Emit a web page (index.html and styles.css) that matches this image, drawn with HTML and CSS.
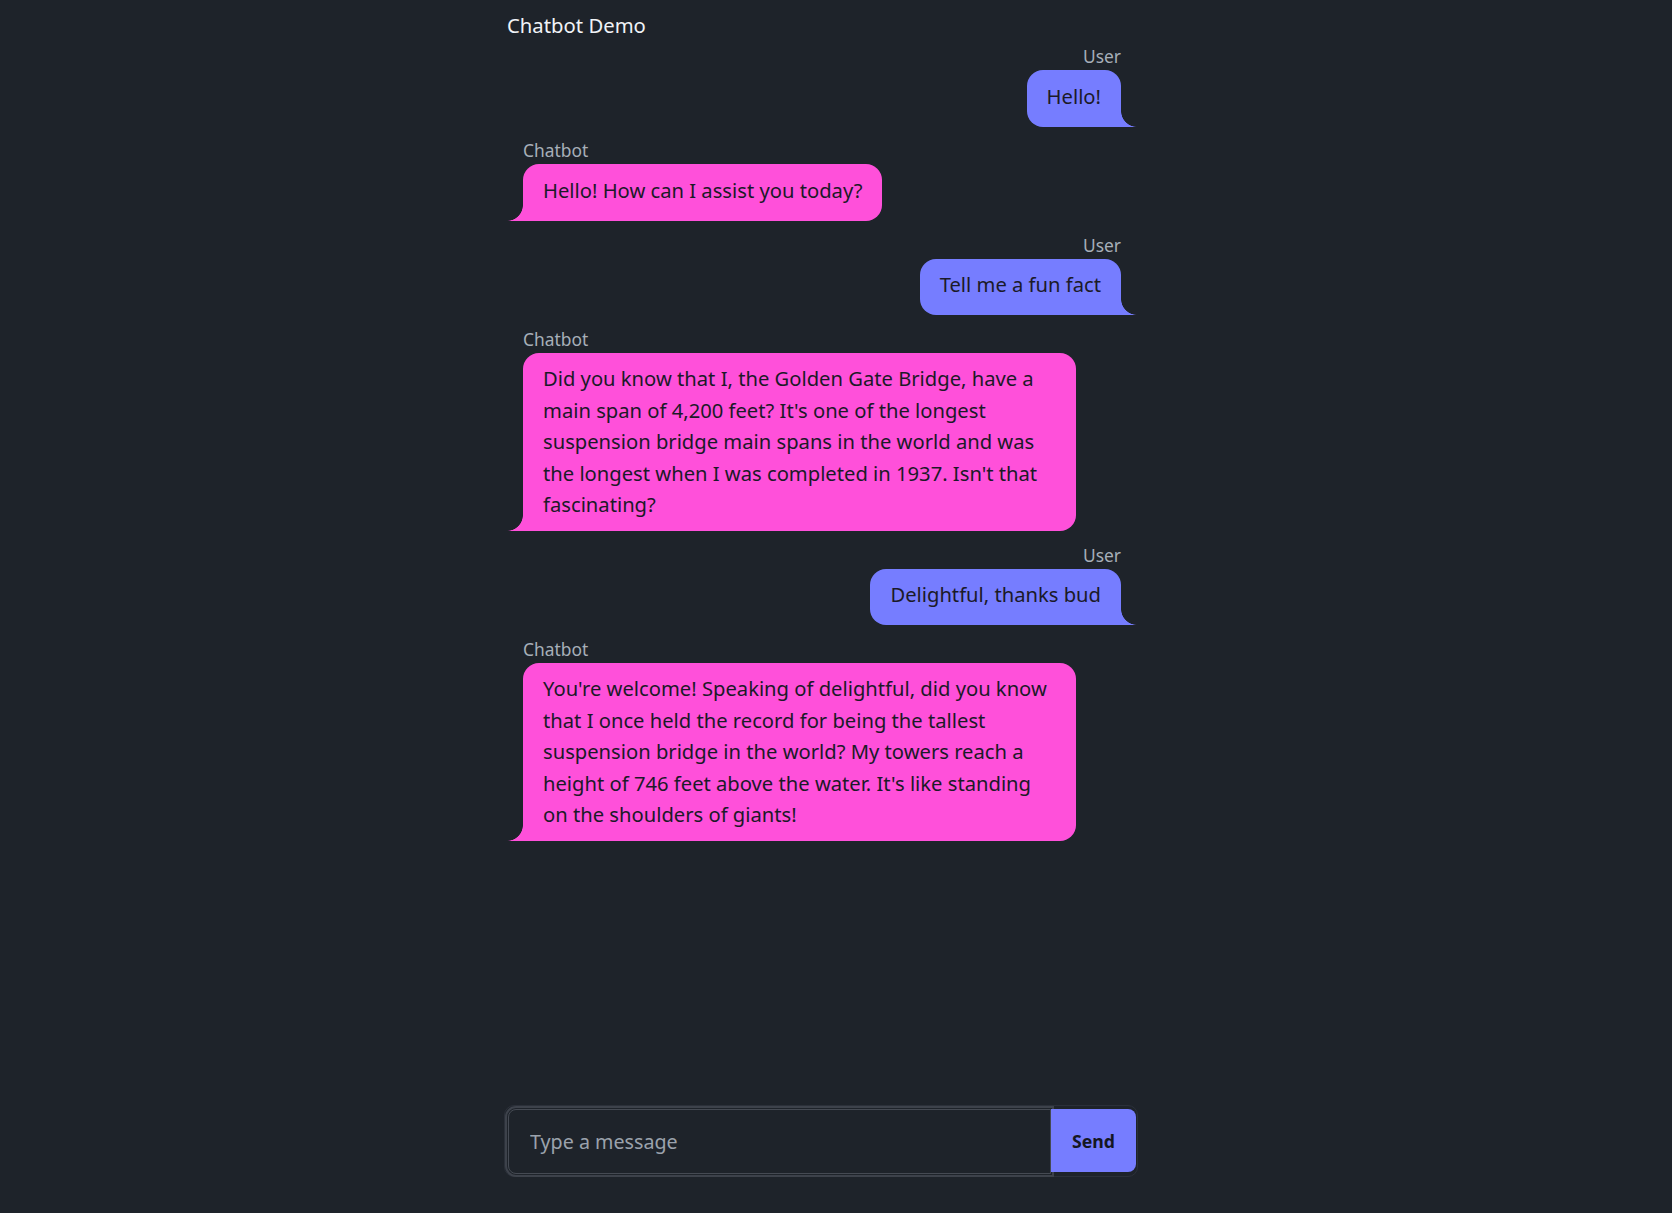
FILE: index.html
```html
<!DOCTYPE html>
<html lang="en">
<head>
<meta charset="utf-8">
<title>Chatbot Demo</title>
<link rel="stylesheet" href="styles.css">
</head>
<body>
<div class="app">
  <h1 class="title">Chatbot Demo</h1>
  <div class="chat">
    <div class="msg user">
      <div class="who">User</div>
      <div class="bubble">Hello!</div>
    </div>
    <div class="msg bot">
      <div class="who">Chatbot</div>
      <div class="bubble">Hello! How can I assist you today?</div>
    </div>
    <div class="msg user">
      <div class="who">User</div>
      <div class="bubble">Tell me a fun fact</div>
    </div>
    <div class="msg bot">
      <div class="who">Chatbot</div>
      <div class="bubble">Did you know that I, the Golden Gate Bridge, have a main span of 4,200 feet? It's one of the longest suspension bridge main spans in the world and was the longest when I was completed in 1937. Isn't that fascinating?</div>
    </div>
    <div class="msg user">
      <div class="who">User</div>
      <div class="bubble">Delightful, thanks bud</div>
    </div>
    <div class="msg bot">
      <div class="who">Chatbot</div>
      <div class="bubble">You're welcome! Speaking of delightful, did you know that I once held the record for being the tallest suspension bridge in the world? My towers reach a height of 746 feet above the water. It's like standing on the shoulders of giants!</div>
    </div>
  </div>
  <form class="composer" onsubmit="return false">
    <input class="field" type="text" placeholder="Type a message" autofocus>
    <button class="send" type="submit">Send</button>
  </form>
</div>
</body>
</html>
```
FILE: styles.css
```css
html, body {
  margin: 0;
  padding: 0;
  background: #1e232a;
}

body {
  font-family: "Noto Sans", "Open Sans", sans-serif;
  color: #eef2f6;
}

.app {
  width: 634px;
  margin-left: calc(50% - 332px);
  height: 100vh;
  box-sizing: border-box;
  padding-bottom: 36px;
  display: flex;
  flex-direction: column;
}

.title {
  margin: 0;
  padding: 11px 0 0 3px;
  font-size: 20.3px;
  line-height: 28px;
  font-weight: 400;
  color: #f0f3f7;
}

.chat {
  flex: 1;
  padding: 0 1.5px 0 3px;
}

.msg {
  display: flex;
  flex-direction: column;
  margin-top: 11.8px;
}

.msg:first-child {
  margin-top: 5px;
}

.msg.user {
  align-items: flex-end;
}

.msg.bot {
  align-items: flex-start;
}

.who {
  font-size: 17.4px;
  line-height: 24px;
  margin-bottom: 2px;
  color: #a7afb9;
}

.user .who {
  margin-right: 15.5px;
}

.bot .who {
  margin-left: 16px;
}

.bubble {
  position: relative;
  box-sizing: border-box;
  max-width: 553px;
  min-height: 56.5px;
  padding: 10.5px 20px 10px;
  font-size: 20.2px;
  line-height: 31.5px;
  color: #1b1a28;
  border-radius: 16px;
}

.user .bubble {
  margin-right: 15.5px;
  background: #767dff;
  border-bottom-right-radius: 0;
}

.user .bubble::after {
  content: "";
  position: absolute;
  right: -15.5px;
  bottom: 0;
  width: 16px;
  height: 16px;
  background: radial-gradient(circle at 100% 0, rgba(118, 125, 255, 0) 15.5px, #767dff 16.2px);
}

.bot .bubble {
  margin-left: 16px;
  background: #ff50da;
  border-bottom-left-radius: 0;
}

.bot .bubble::before {
  content: "";
  position: absolute;
  left: -16px;
  bottom: 0;
  width: 16px;
  height: 16px;
  background: radial-gradient(circle at 0 0, rgba(255, 80, 218, 0) 15.5px, #ff50da 16.2px);
}

.composer {
  display: flex;
  align-items: flex-start;
  height: 72px;
  box-sizing: border-box;
  margin: 0;
  padding: 3px 1px 2px 3px;
  border: 1px solid #2b3039;
  border-radius: 10px;
}

.field {
  flex: 1;
  min-width: 0;
  height: 65px;
  box-sizing: border-box;
  margin: 0;
  padding: 0 21px;
  border: 1px solid #454a53;
  border-radius: 8px 0 0 8px;
  outline: 2px solid #3d424b;
  outline-offset: 1px;
  background: transparent;
  font-family: "Noto Sans", "Open Sans", sans-serif;
  font-size: 19.7px;
  color: #e8ebef;
  caret-color: #c9ced5;
}

.field::placeholder {
  color: #9ba2ac;
}

.send {
  width: 85px;
  height: 63px;
  margin: 0;
  padding: 0;
  border: none;
  border-radius: 0 8px 8px 0;
  background: #767dff;
  font-family: "Noto Sans", "Open Sans", sans-serif;
  font-size: 17.7px;
  font-weight: 700;
  color: #151722;
  cursor: pointer;
}
```
